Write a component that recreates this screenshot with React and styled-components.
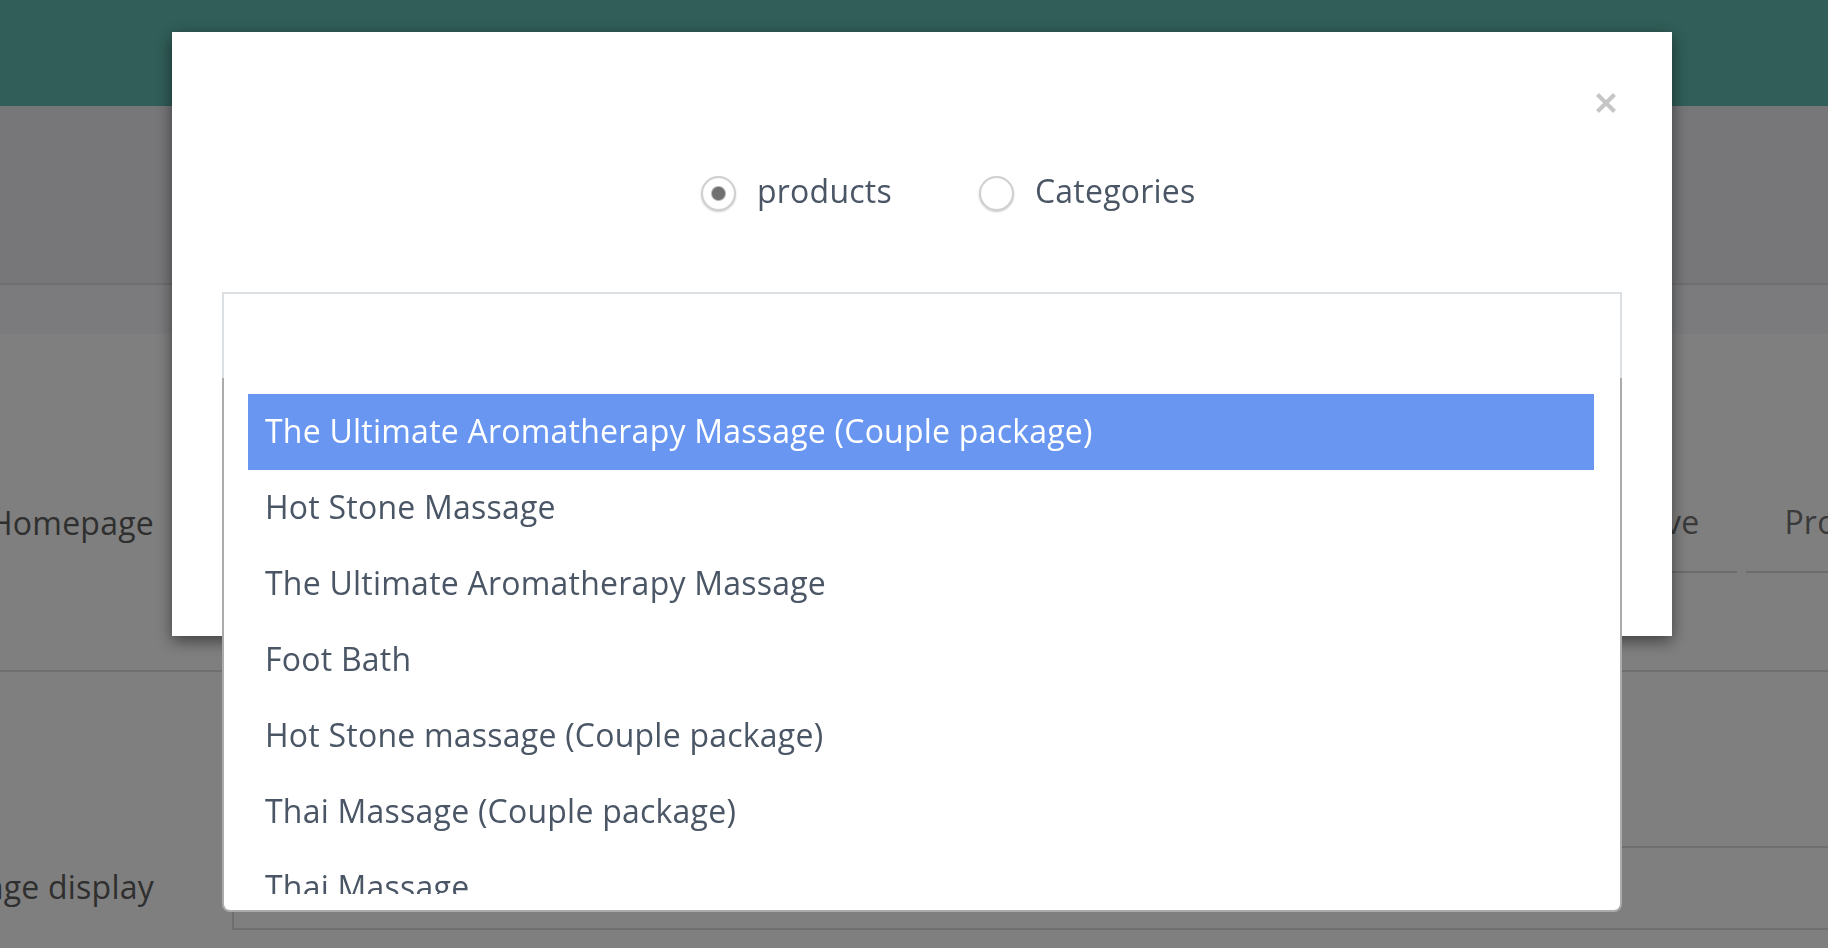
import React from "react";
import styled, { createGlobalStyle } from "styled-components";

const GlobalStyle = createGlobalStyle`
  html, body {
    margin: 0;
    padding: 0;
  }
  body {
    font-family: "Open Sans", "Noto Sans", sans-serif;
    background: #ffffff;
    overflow: hidden;
    letter-spacing: 0.23px;
  }
  *, *::before, *::after {
    box-sizing: border-box;
  }
`;

/* ---------- page behind the modal ---------- */

const Page = styled.div`
  width: 1828px;
  height: 948px;
  overflow: hidden;
  background: #ffffff;
`;

const Header = styled.header`
  height: 106px;
  background: #62bcb1;
`;

const TitleBand = styled.div`
  height: 179px;
  background: #eeeff3;
  border-bottom: 2px solid #dddee2;
`;

const SubBand = styled.div`
  height: 49px;
  background: #f6f7fa;
`;

const Form = styled.div`
  padding-top: 44px;
`;

const FormRow = styled.div`
  display: flex;
  align-items: center;
  padding: ${(p) => p.$padding};
  border-bottom: ${(p) => (p.$divider ? "2px solid #dcdcdc" : "none")};
`;

const FieldLabel = styled.div`
  flex: none;
  width: 170px;
  margin-left: -16px;
  margin-right: 78px;
  padding-bottom: 4px;
  display: flex;
  justify-content: flex-end;
  white-space: nowrap;
  font-size: 32px;
  color: #5e5e5e;
`;

const TabGroup = styled.div`
  display: flex;
  gap: 9px;
  flex: none;
`;

const Tab = styled.div`
  flex: none;
  width: ${(p) => (p.$width ? `${p.$width}px` : "auto")};
  height: 98px;
  padding: 0 38px 4px;
  display: flex;
  align-items: center;
  font-size: 32px;
  color: #747474;
  white-space: nowrap;
  border-bottom: 2px solid #d8d8d8;
`;

const TextField = styled.div`
  flex: none;
  width: 1700px;
  height: 84px;
  border: 2px solid #dedede;
  background: #ffffff;
`;

/* ---------- modal ---------- */

const Backdrop = styled.div`
  position: fixed;
  inset: 0;
  background: rgba(0, 0, 0, 0.5);
`;

const ModalLayer = styled.div`
  position: fixed;
  inset: 0;
  display: flex;
  align-items: flex-start;
  padding: 32px 0 0 172px;
`;

const Modal = styled.div`
  width: 1500px;
  height: 604px;
  background: #ffffff;
  box-shadow: 0 5px 15px rgba(0, 0, 0, 0.5);
  padding: 60px 50px 0;
  display: flex;
  flex-direction: column;
`;

const CloseRow = styled.div`
  display: flex;
  justify-content: flex-end;
  padding-right: 5px;
`;

const CloseButton = styled.button`
  width: 22px;
  height: 22px;
  padding: 0;
  border: 0;
  background: none;
  color: #c6c6c6;
  display: flex;
  cursor: pointer;
`;

const RadioRow = styled.div`
  margin-top: 60px;
  height: 38px;
  display: flex;
  align-items: center;
  gap: 87px;
  padding-left: 479px;
`;

const RadioOption = styled.label`
  display: flex;
  align-items: center;
  gap: 21px;
  font-size: 32px;
  line-height: 38px;
  color: #4a5665;
  cursor: pointer;
`;

const RadioText = styled.span`
  padding-bottom: 5px;
`;

const RadioInput = styled.input`
  appearance: none;
  margin: 0;
  width: 35px;
  height: 35px;
  border-radius: 50%;
  border: 2px solid #d0d0d0;
  box-shadow: 0 1px 2px rgba(0, 0, 0, 0.2), inset 0 0 1px rgba(0, 0, 0, 0.1);
  background: #ffffff;
  &:checked {
    background: radial-gradient(circle, #707070 0, #707070 6px, rgba(112, 112, 112, 0) 8px),
      #ffffff;
  }
`;

const SelectWrap = styled.div`
  position: relative;
  margin-top: 80px;
`;

const SelectBox = styled.div`
  height: 86px;
  border: 2px solid #dde0e3;
  border-bottom: 0;
  background: #ffffff;
`;

const Dropdown = styled.div`
  position: absolute;
  top: 100%;
  left: 0;
  right: 0;
  background: #ffffff;
  border: 2px solid #ababab;
  border-top: 0;
  border-radius: 0 0 8px 8px;
  padding: 16px 26px 16px 24px;
`;

const OptionList = styled.ul`
  list-style: none;
  margin: 0;
  padding: 0;
  max-height: 500px;
  overflow: hidden;
`;

const Option = styled.li`
  padding: 13px 17px 15px;
  font-size: 32px;
  line-height: 48px;
  white-space: nowrap;
  color: ${(p) => (p.$active ? "#ffffff" : "#4a5665")};
  background: ${(p) => (p.$active ? "#6896f0" : "transparent")};
`;

const products = [
  "The Ultimate Aromatherapy Massage (Couple package)",
  "Hot Stone Massage",
  "The Ultimate Aromatherapy Massage",
  "Foot Bath",
  "Hot Stone massage (Couple package)",
  "Thai Massage (Couple package)",
  "Thai Massage",
  "Swedish Massage",
];

function CloseIcon() {
  return (
    <svg width="22" height="22" viewBox="0 0 22 22" aria-hidden="true">
      <path d="M2.5 2.5 L19.5 19.5 M19.5 2.5 L2.5 19.5" stroke="currentColor" strokeWidth="4.2" />
    </svg>
  );
}

export default function App() {
  return (
    <>
      <GlobalStyle />
      <Page>
        <Header />
        <TitleBand />
        <SubBand />
        <Form>
          <FormRow $padding="97px 0" $divider>
            <FieldLabel>
              <span>Homepage</span>
            </FieldLabel>
            <TabGroup>
              <Tab $width={1330}>All</Tab>
              <Tab>Active</Tab>
              <Tab>Products</Tab>
            </TabGroup>
          </FormRow>
          <FormRow $padding="174px 0 0">
            <FieldLabel>
              <span>Image display</span>
            </FieldLabel>
            <TextField />
          </FormRow>
        </Form>
      </Page>

      <Backdrop />
      <ModalLayer>
        <Modal role="dialog" aria-modal="true">
          <CloseRow>
            <CloseButton aria-label="Close">
              <CloseIcon />
            </CloseButton>
          </CloseRow>
          <RadioRow>
            <RadioOption>
              <RadioInput type="radio" name="kind" defaultChecked />
              <RadioText>products</RadioText>
            </RadioOption>
            <RadioOption>
              <RadioInput type="radio" name="kind" />
              <RadioText>Categories</RadioText>
            </RadioOption>
          </RadioRow>
          <SelectWrap>
            <SelectBox />
            <Dropdown>
              <OptionList>
                {products.map((name, i) => (
                  <Option key={name} $active={i === 0}>
                    {name}
                  </Option>
                ))}
              </OptionList>
            </Dropdown>
          </SelectWrap>
        </Modal>
      </ModalLayer>
    </>
  );
}
